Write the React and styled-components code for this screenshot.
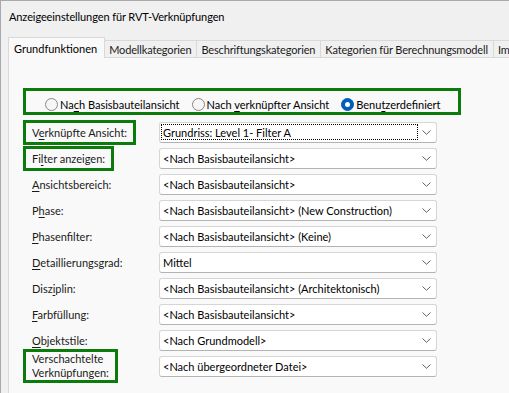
import React from 'react';
import styled, { createGlobalStyle } from 'styled-components';

const GREEN = '#0b7b0b';

const GlobalStyle = createGlobalStyle`
  html, body {
    margin: 0;
    padding: 0;
    background: #f0f0f0;
  }
  body {
    font-family: Lato, 'Noto Sans', 'Liberation Sans', sans-serif;
    font-size: 11px;
    color: #000;
  }
`;

const Window = styled.div`
  width: 509px;
  height: 393px;
  box-sizing: border-box;
  border-top: 1px solid #a9a9a9;
  border-left: 1px solid #a9a9a9;
  background: #f0f0f0;
  display: flex;
  flex-direction: column;
  overflow: hidden;
`;

const Title = styled.div`
  height: 36px;
  box-sizing: border-box;
  padding: 7px 0 0 8px;
  line-height: 17px;
  font-size: 11px;
  letter-spacing: -0.1px;
  white-space: nowrap;
`;

const TabStrip = styled.div`
  display: flex;
  align-items: flex-end;
  height: 20px;
  padding-left: 7px;
  position: relative;
  z-index: 1;
  white-space: nowrap;
`;

const Tab = styled.div`
  box-sizing: border-box;
  height: ${(p) => (p.$active ? '21px' : '17px')};
  margin-bottom: ${(p) => (p.$active ? '-1px' : '0')};
  margin-left: ${(p) => (p.$first ? '0' : '-1px')};
  padding: ${(p) => (p.$active ? '0 7px 0 5px' : '0 5px 0 4px')};
  border: 1px solid #d9d9d9;
  border-bottom: none;
  background: ${(p) => (p.$active ? '#f9f9f9' : '#f0f0f0')};
  color: ${(p) => (p.$active ? '#000' : '#1a1a1a')};
  letter-spacing: ${(p) => (p.$active ? '0' : '-0.15px')};
  display: flex;
  align-items: center;
  flex-shrink: 0;
`;

const Panel = styled.div`
  flex: 1;
  margin-left: 7px;
  background: #f9f9f9;
  border-top: 1px solid #d9d9d9;
  border-left: 1px solid #d9d9d9;
  padding: 30px 0 0 14px;
`;

const RadioGroup = styled.div`
  box-sizing: border-box;
  width: 438px;
  height: 27px;
  border: 3px solid ${GREEN};
  padding: 5px 0 0 19px;
  display: flex;
  align-items: center;
  white-space: nowrap;
`;

const RadioItem = styled.label`
  display: flex;
  align-items: center;
  gap: 2px;
  margin-right: 12px;
`;

const RadioCircle = styled.span`
  box-sizing: border-box;
  width: 13px;
  height: 13px;
  border-radius: 50%;
  border: 1px solid ${(p) => (p.$checked ? '#005fb8' : '#878787')};
  background: ${(p) => (p.$checked ? '#005fb8' : '#f6f6f6')};
  display: flex;
  align-items: center;
  justify-content: center;

  &::after {
    content: '';
    display: ${(p) => (p.$checked ? 'block' : 'none')};
    width: 5px;
    height: 5px;
    border-radius: 50%;
    background: #fff;
  }
`;

const Rows = styled.div`
  margin-top: 4px;
  display: flex;
  flex-direction: column;
`;

const Row = styled.div`
  height: 26px;
  display: flex;
  align-items: center;
`;

const LabelCell = styled.div`
  width: 136px;
  flex-shrink: 0;
  display: flex;
  align-items: center;
`;

const LabelBox = styled.div`
  border: 3px solid ${(p) => (p.$boxed ? GREEN : 'transparent')};
  padding: ${(p) => (p.$multi ? '0 6px' : '3px 6px 2px 6px')};
  line-height: 14px;
  white-space: pre-line;
  color: #1a1a1a;
`;

const Mnemonic = styled.span`
  text-decoration: underline;
  text-underline-offset: 2px;
`;

const Select = styled.div`
  box-sizing: border-box;
  width: 278px;
  height: 21px;
  background: #fff;
  border: 1px solid #d6d6d6;
  border-bottom-color: #b3b3b3;
  border-radius: 3px;
  display: flex;
  align-items: center;
`;

const SelectValue = styled.div`
  flex: 1;
  height: 14px;
  margin-left: 2px;
  padding-left: 1px;
  display: flex;
  align-items: center;
  white-space: nowrap;
  overflow: hidden;
  outline: ${(p) => (p.$focused ? '1px dotted #000' : 'none')};
`;

const Arrow = styled.div`
  width: 19px;
  display: flex;
  align-items: center;
  justify-content: center;
`;

const Chevron = () => (
  <svg width="9" height="5" viewBox="0 0 9 5">
    <path d="M0.5 0.5 L4.5 4.3 L8.5 0.5" fill="none" stroke="#616161" strokeWidth="1" />
  </svg>
);

const withMnemonic = (text, idx) => {
  if (idx === undefined || idx < 0) return text;
  return (
    <>
      {text.slice(0, idx)}
      <Mnemonic>{text[idx]}</Mnemonic>
      {text.slice(idx + 1)}
    </>
  );
};

const tabs = [
  'Grundfunktionen',
  'Modellkategorien',
  'Beschriftungskategorien',
  'Kategorien für Berechnungsmodell',
  'Importierte Kategorien',
];

const radios = [
  { text: 'Nach Basisbauteilansicht', u: 2 },
  { text: 'Nach verknüpfter Ansicht', u: 5 },
  { text: 'Benutzerdefiniert', u: 4, checked: true },
];

const rows = [
  { label: 'Verknüpfte Ansicht:', u: 1, value: 'Grundriss: Level 1- Filter A', boxed: true, focused: true },
  { label: 'Filter anzeigen:', u: 2, value: '<Nach Basisbauteilansicht>', boxed: true },
  { label: 'Ansichtsbereich:', u: 0, value: '<Nach Basisbauteilansicht>' },
  { label: 'Phase:', u: 1, value: '<Nach Basisbauteilansicht> (New Construction)' },
  { label: 'Phasenfilter:', u: 0, value: '<Nach Basisbauteilansicht> (Keine)' },
  { label: 'Detaillierungsgrad:', u: 0, value: 'Mittel' },
  { label: 'Disziplin:', u: 4, value: '<Nach Basisbauteilansicht> (Architektonisch)' },
  { label: 'Farbfüllung:', u: 0, value: '<Nach Basisbauteilansicht>' },
  { label: 'Objektstile:', u: 0, value: '<Nach Grundmodell>' },
  { label: 'Verschachtelte\nVerknüpfungen:', value: '<Nach übergeordneter Datei>', boxed: true, multi: true },
];

const App = () => (
  <>
    <GlobalStyle />
    <Window>
      <Title>Anzeigeeinstellungen für RVT-Verknüpfungen</Title>

      <TabStrip>
        {tabs.map((t, i) => (
          <Tab key={t} $active={i === 0} $first={i === 0}>
            {t}
          </Tab>
        ))}
      </TabStrip>

      <Panel>
        <RadioGroup>
          {radios.map((r) => (
            <RadioItem key={r.text}>
              <RadioCircle $checked={r.checked} />
              <span>{withMnemonic(r.text, r.u)}</span>
            </RadioItem>
          ))}
        </RadioGroup>

        <Rows>
          {rows.map((r) => (
            <Row key={r.label}>
              <LabelCell>
                <LabelBox $boxed={r.boxed} $multi={r.multi}>
                  {withMnemonic(r.label, r.u)}
                </LabelBox>
              </LabelCell>
              <Select>
                <SelectValue $focused={r.focused}>{r.value}</SelectValue>
                <Arrow>
                  <Chevron />
                </Arrow>
              </Select>
            </Row>
          ))}
        </Rows>
      </Panel>
    </Window>
  </>
);

export default App;
